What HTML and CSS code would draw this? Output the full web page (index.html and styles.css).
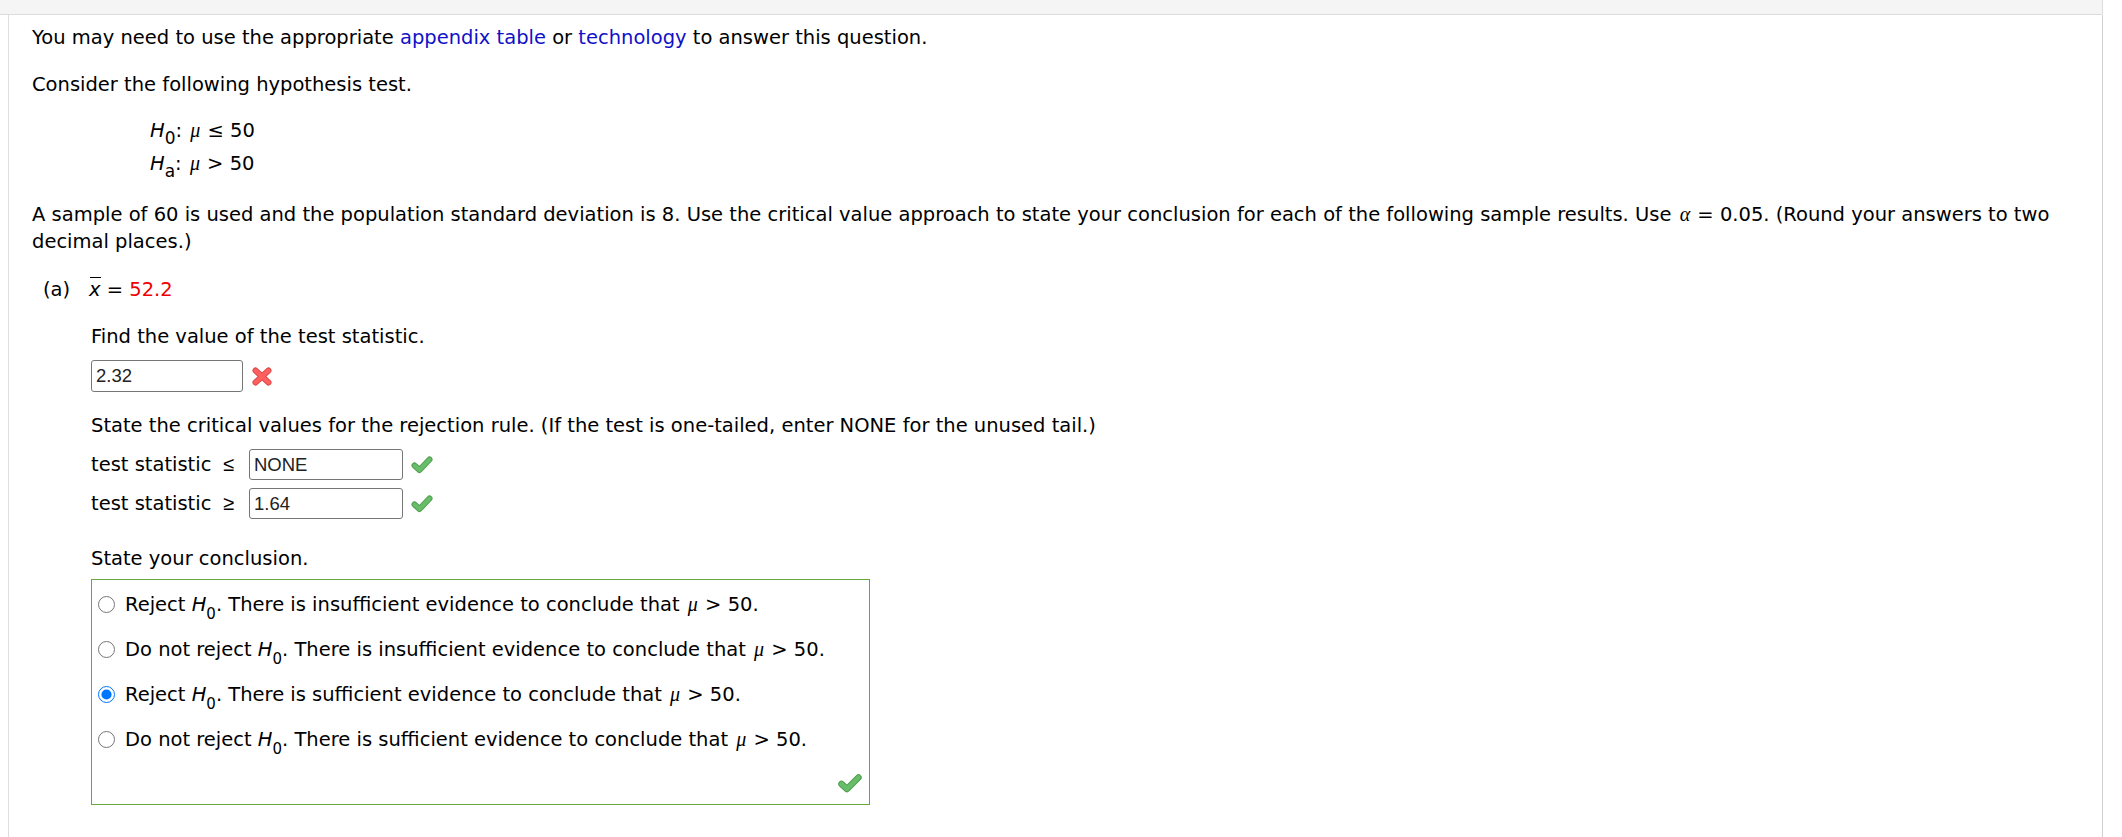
FILE: index.html
```html
<!DOCTYPE html>
<html lang="en">
<head>
    <meta charset="UTF-8">
    <title>Hypothesis Test Question</title>
    <link rel="stylesheet" href="styles.css">
</head>
<body>
    <div class="page">
        <div class="top-bar"></div>

        <div class="question">
            <p>You may need to use the appropriate <a href="#">appendix table</a> or <a href="#">technology</a> to answer this question.</p>

            <p>Consider the following hypothesis test.</p>

            <div class="hypotheses">
                <div><i>H</i><sub>0</sub>: <span class="math">μ</span> ≤ 50</div>
                <div><i>H</i><sub>a</sub>: <span class="math">μ</span> &gt; 50</div>
            </div>

            <p>A sample of 60 is used and the population standard deviation is 8. Use the critical value approach to state your conclusion for each of the following sample results. Use <span class="math">α</span> = 0.05. (Round your answers to two<br>decimal places.)</p>

            <div class="part">
                <div class="part-head">
                    <span class="part-label">(a)</span><span class="xbar">x</span> = <span class="given">52.2</span>
                </div>

                <div class="part-body">
                    <p class="prompt">Find the value of the test statistic.</p>
                    <div class="answer-row">
                        <input class="field field-wide" type="text" value="2.32">
                        <svg class="mark" width="20" height="19" viewBox="0 0 20 19">
                            <path d="M3.5 3.5 L16.5 15.5 M16.5 3.5 L3.5 15.5" stroke="#dc4a4a" stroke-width="6" stroke-linecap="round" fill="none"/>
                            <path d="M3.5 3.5 L16.5 15.5 M16.5 3.5 L3.5 15.5" stroke="#ff5f5f" stroke-width="4" stroke-linecap="round" fill="none"/>
                        </svg>
                    </div>

                    <p class="prompt">State the critical values for the rejection rule. (If the test is one-tailed, enter NONE for the unused tail.)</p>
                    <div class="crit-row">
                        <span class="crit-label">test statistic</span>
                        <span class="op">≤</span>
                        <input class="field" type="text" value="NONE">
                        <svg class="mark" width="22" height="18" viewBox="0 0 22 18">
                            <path d="M3.5 9.5 L8.5 14 L18.5 3.5" stroke="#4f9e4f" stroke-width="6" stroke-linecap="round" stroke-linejoin="round" fill="none"/>
                            <path d="M3.5 9.5 L8.5 14 L18.5 3.5" stroke="#68bd68" stroke-width="4" stroke-linecap="round" stroke-linejoin="round" fill="none"/>
                        </svg>
                    </div>
                    <div class="crit-row">
                        <span class="crit-label">test statistic</span>
                        <span class="op">≥</span>
                        <input class="field" type="text" value="1.64">
                        <svg class="mark" width="22" height="18" viewBox="0 0 22 18">
                            <path d="M3.5 9.5 L8.5 14 L18.5 3.5" stroke="#4f9e4f" stroke-width="6" stroke-linecap="round" stroke-linejoin="round" fill="none"/>
                            <path d="M3.5 9.5 L8.5 14 L18.5 3.5" stroke="#68bd68" stroke-width="4" stroke-linecap="round" stroke-linejoin="round" fill="none"/>
                        </svg>
                    </div>

                    <p class="prompt conclusion">State your conclusion.</p>
                    <div class="choices">
                        <label class="choice"><input type="radio" name="concl"><span>Reject <i>H</i><sub>0</sub>. There is insufficient evidence to conclude that <span class="math">μ</span> &gt; 50.</span></label>
                        <label class="choice"><input type="radio" name="concl"><span>Do not reject <i>H</i><sub>0</sub>. There is insufficient evidence to conclude that <span class="math">μ</span> &gt; 50.</span></label>
                        <label class="choice"><input type="radio" name="concl" checked><span>Reject <i>H</i><sub>0</sub>. There is sufficient evidence to conclude that <span class="math">μ</span> &gt; 50.</span></label>
                        <label class="choice"><input type="radio" name="concl"><span>Do not reject <i>H</i><sub>0</sub>. There is sufficient evidence to conclude that <span class="math">μ</span> &gt; 50.</span></label>
                        <div class="choices-mark">
                            <svg class="mark" width="24" height="19" viewBox="0 0 24 19">
                                <path d="M3.5 10 L9 15 L20.5 3.5" stroke="#4f9e4f" stroke-width="6.5" stroke-linecap="round" stroke-linejoin="round" fill="none"/>
                                <path d="M3.5 10 L9 15 L20.5 3.5" stroke="#68bd68" stroke-width="4.5" stroke-linecap="round" stroke-linejoin="round" fill="none"/>
                            </svg>
                        </div>
                    </div>
                </div>
            </div>
        </div>
    </div>
</body>
</html>
```

FILE: styles.css
```css
body {
    margin: 0;
    background: #fff;
    font-family: "DejaVu Sans", Verdana, sans-serif;
    font-size: 19.5px;
    line-height: 27px;
    color: #000;
    overflow: hidden;
}

.page {
    width: 2103px;
}

.top-bar {
    height: 14px;
    background: #f5f5f5;
    border-bottom: 1px solid #dcdcdc;
    border-right: 1px solid #dcdcdc;
    border-bottom-right-radius: 2px;
}

.question {
    margin-left: 8px;
    height: 822px;
    box-sizing: border-box;
    border-left: 1px solid #dedede;
    border-right: 1px solid #cfcfcf;
    padding: 9px 12px 0 23px;
}

p {
    margin: 0 0 20px;
}

a {
    color: #1010c8;
    text-decoration: none;
}

i {
    font-style: italic;
}

sub {
    font-size: 17px;
    line-height: 0;
    vertical-align: -7px;
}

.math {
    font-family: "Liberation Serif", "Times New Roman", serif;
    font-style: italic;
    font-size: 20px;
    margin: 0 1px 0 2px;
}

/* negative top margin collapses with the paragraph above */
.hypotheses {
    margin: -4px 0 21px 118px;
    line-height: 32px;
}

.part-head {
    margin-top: 21px;
    padding-left: 11px;
}

.part-label {
    display: inline-block;
    width: 46px;
}

.xbar {
    position: relative;
    font-style: italic;
}

.xbar::before {
    content: "";
    position: absolute;
    left: 1px;
    right: 0;
    top: -1px;
    border-top: 1.5px solid #000;
}

.given {
    color: #f00000;
}

.part-body {
    margin: 20px 0 0 59px;
}

.prompt {
    margin-bottom: 10px;
}

.answer-row {
    display: flex;
    align-items: center;
    gap: 9px;
    margin-bottom: 20px;
}

.field {
    width: 154px;
    height: 31px;
    box-sizing: border-box;
    border: 1px solid #767676;
    border-radius: 3px;
    padding: 0 4px;
    font-family: "Liberation Sans", Arial, sans-serif;
    font-size: 18.5px;
    color: #222;
    background: #fff;
    margin: 0;
}

.field-wide {
    width: 152px;
    height: 32px;
}

.crit-row {
    display: flex;
    align-items: center;
    margin-bottom: 8px;
}

.crit-label {
    width: 132px;
}

.op {
    width: 26px;
    font-family: "Liberation Sans", Arial, sans-serif;
    font-size: 20px;
}

.crit-row .mark {
    margin-left: 8px;
}

.conclusion {
    margin-top: 26px;
    margin-bottom: 7px;
}

.choices {
    width: 779px;
    box-sizing: border-box;
    border: 1px solid #64a83e;
    padding: 11px 7px 11px 6px;
}

.choice {
    display: flex;
    align-items: center;
    margin-bottom: 18px;
    white-space: nowrap;
}

.choice sub {
    font-size: 15px;
    vertical-align: -8px;
}

.choice input {
    width: 17px;
    height: 17px;
    margin: 0 10px 0 0;
    flex: none;
}

/* collapses with the last choice's bottom margin */
.choices-mark {
    display: flex;
    justify-content: flex-end;
    margin-top: 21px;
}

.mark {
    display: block;
    flex: none;
}
```
